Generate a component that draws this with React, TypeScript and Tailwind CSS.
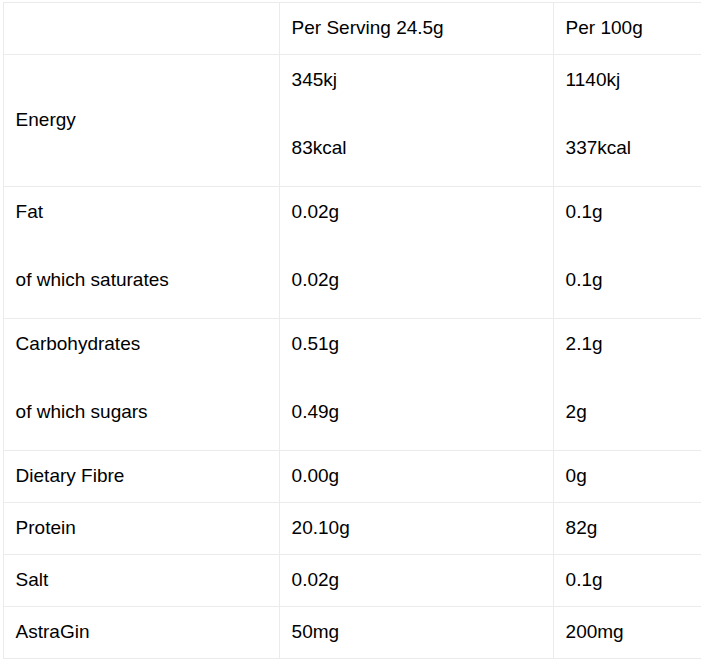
const rows: { label: string[]; serving: string[]; per100: string[] }[] = [
  { label: ['Energy'], serving: ['345kj', '83kcal'], per100: ['1140kj', '337kcal'] },
  { label: ['Fat', 'of which saturates'], serving: ['0.02g', '0.02g'], per100: ['0.1g', '0.1g'] },
  { label: ['Carbohydrates', 'of which sugars'], serving: ['0.51g', '0.49g'], per100: ['2.1g', '2g'] },
  { label: ['Dietary Fibre'], serving: ['0.00g'], per100: ['0g'] },
  { label: ['Protein'], serving: ['20.10g'], per100: ['82g'] },
  { label: ['Salt'], serving: ['0.02g'], per100: ['0.1g'] },
  { label: ['AstraGin'], serving: ['50mg'], per100: ['200mg'] },
]

function Cell({ lines }: { lines: string[] }) {
  return (
    <td className="border border-[#ebebeb] pl-[11.6px] pr-3 align-middle">
      {lines.length === 1 ? (
        <div className="pt-[11px] pb-[13px]">{lines[0]}</div>
      ) : (
        <div className="pt-[11px] pb-[25px]">
          <div className="mb-[41px]">{lines[0]}</div>
          <div>{lines[1]}</div>
        </div>
      )}
    </td>
  )
}

export default function App() {
  return (
    <div className="w-[701px] h-[660px] overflow-hidden bg-white">
      <div className="pl-[3px] pt-[2px]">
        <table
          className="table-fixed border-collapse w-[826px] text-[19px] leading-[27px] text-black"
          style={{ fontFamily: '"Liberation Sans", Arial, sans-serif' }}
        >
          <colgroup>
            <col className="w-[276px]" />
            <col className="w-[274px]" />
            <col className="w-[276px]" />
          </colgroup>
          <thead>
            <tr>
              <th className="border border-[#ebebeb] pl-[11.6px] pr-3 pt-[11px] pb-[13px] font-normal text-left"></th>
              <th className="border border-[#ebebeb] pl-[11.6px] pr-3 pt-[11px] pb-[13px] font-normal text-left">Per Serving 24.5g</th>
              <th className="border border-[#ebebeb] pl-[11.6px] pr-3 pt-[11px] pb-[13px] font-normal text-left">Per 100g</th>
            </tr>
          </thead>
          <tbody>
            {rows.map((r) => (
              <tr key={r.label[0]}>
                <Cell lines={r.label} />
                <Cell lines={r.serving} />
                <Cell lines={r.per100} />
              </tr>
            ))}
          </tbody>
        </table>
      </div>
    </div>
  )
}
